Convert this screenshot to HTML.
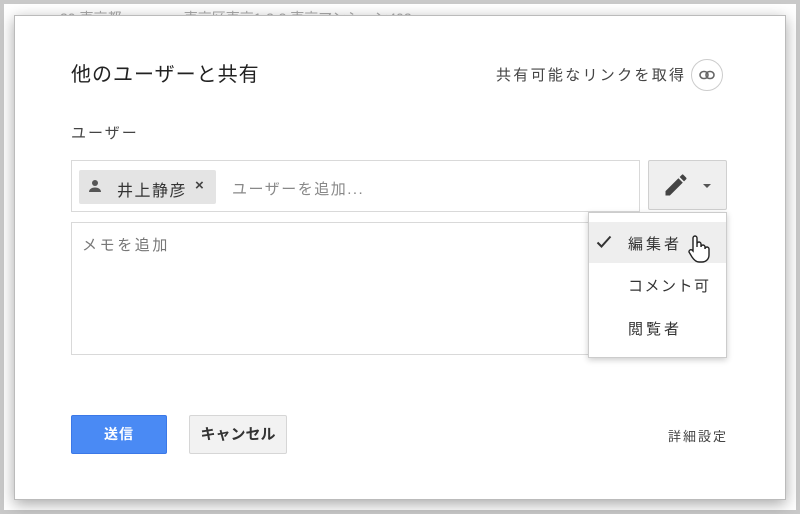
<!DOCTYPE html>
<html><head><meta charset="utf-8"><style>
*{box-sizing:border-box;margin:0;padding:0}
body{width:800px;height:514px;overflow:hidden;background:#c9c9c9;font-family:"Liberation Sans","Noto Sans CJK JP",sans-serif;position:relative}
.bg{position:absolute;left:4px;top:4px;right:4px;bottom:4px;background:#fff}
.bgtxt{position:absolute;top:8px;left:60px;color:#aaa;font-size:14px}
.dlg{position:absolute;left:14px;top:15px;width:772px;height:485px;background:#fff;border:1px solid #bbb;box-shadow:0 4px 14px rgba(0,0,0,.35)}
.a{position:absolute;white-space:nowrap;letter-spacing:2px}
</style></head><body>
<div class="bg"></div>
<div class="bgtxt">30 東京都&nbsp;&nbsp;&nbsp;&nbsp;&nbsp;&nbsp;&nbsp;&nbsp;&nbsp;&nbsp;&nbsp;&nbsp;&nbsp;&nbsp;&nbsp;&nbsp;東京区東京1-2-3 東京マンション402</div>
<div class="dlg"></div>
<div class="a" style="left:71px;top:58px;font-size:20px;color:#222;letter-spacing:1px">他のユーザーと共有</div>
<div class="a" style="left:496px;top:64px;font-size:15px;color:#444;letter-spacing:2.3px">共有可能なリンクを取得</div>
<div class="a" style="left:691px;top:59px;width:32px;height:32px;border:1px solid #ccc;border-radius:50%"><svg width="30" height="30" viewBox="0 0 30 30"><rect x="8" y="11.5" width="8" height="7" rx="3.5" fill="none" stroke="#666" stroke-width="1.6"/><rect x="14" y="11.5" width="8" height="7" rx="3.5" fill="none" stroke="#666" stroke-width="1.6"/></svg></div>
<div class="a" style="left:71px;top:122px;font-size:15px;color:#444">ユーザー</div>
<div class="a" style="left:71px;top:160px;width:569px;height:52px;border:1px solid #d9d9d9"></div>
<div class="a" style="left:79px;top:170px;width:137px;height:34px;background:#e4e4e4;border-radius:2px"></div>
<svg class="a" style="left:87px;top:178px" width="16" height="16" viewBox="0 0 16 16"><circle cx="8" cy="5" r="3" fill="#555"/><path d="M2 14c0-3 3-4.5 6-4.5s6 1.5 6 4.5z" fill="#555"/></svg>
<div class="a" style="left:117px;top:177px;font-size:16px;color:#333;letter-spacing:1.5px">井上静彦</div>
<div class="a" style="left:195px;top:177px;font-size:15px;color:#444;font-weight:bold">×</div>
<div class="a" style="left:232px;top:178px;font-size:15px;color:#888;letter-spacing:1.5px">ユーザーを追加...</div>
<div class="a" style="left:648px;top:160px;width:79px;height:50px;background:#efefef;border:1px solid #d0d0d0;border-radius:2px"></div>
<svg class="a" style="left:662px;top:171px" width="28" height="28" viewBox="0 0 24 24"><path d="M3 17.25V21h3.75L17.81 9.94l-3.75-3.75L3 17.25zM20.71 7.04a1 1 0 000-1.41l-2.34-2.34a1 1 0 00-1.41 0l-1.83 1.83 3.75 3.75 1.83-1.83z" fill="#444"/></svg>
<div class="a" style="left:703px;top:184px;border-left:4px solid transparent;border-right:4px solid transparent;border-top:4px solid #555"></div>
<div class="a" style="left:71px;top:222px;width:530px;height:133px;border:1px solid #d9d9d9"></div>
<div class="a" style="left:82px;top:234px;font-size:15px;color:#777;letter-spacing:2.6px">メモを追加</div>
<div class="a" style="left:588px;top:212px;width:139px;height:146px;background:#fff;border:1px solid #ccc;box-shadow:0 2px 6px rgba(0,0,0,.2)"></div>
<div class="a" style="left:589px;top:222px;width:137px;height:41px;background:#eee"></div>
<svg class="a" style="left:596px;top:235px" width="16" height="14" viewBox="0 0 16 14"><path d="M1.5 7.5l4 4 9-10" fill="none" stroke="#333" stroke-width="2"/></svg>
<div class="a" style="left:628px;top:233px;font-size:15px;color:#333;letter-spacing:3px">編集者</div>
<svg class="a" style="left:686px;top:234px" width="24" height="30" viewBox="0 0 24 30"><path d="M7 17V4a2 2 0 014 0v9V10a2 2 0 014 0v3a2 2 0 014 0v2a2 2 0 014 0v6c0 4-3 7-7 7h-3c-3 0-5-2-7-5l-3-5a2 2 0 013-2z" fill="#fff" stroke="#222" stroke-width="1.4"/></svg>
<div class="a" style="left:628px;top:275px;font-size:15px;color:#333;letter-spacing:1.5px">コメント可</div>
<div class="a" style="left:628px;top:318px;font-size:15px;color:#333;letter-spacing:3px">閲覧者</div>
<div class="a" style="left:71px;top:415px;width:96px;height:39px;background:#4a8af4;border:1px solid #3b78e7;border-radius:2px;color:#fff;font-size:14px;font-weight:bold;text-align:center;line-height:37px;letter-spacing:1px">送信</div>
<div class="a" style="left:189px;top:415px;width:98px;height:39px;background:#f2f2f2;border:1px solid #d6d6d6;border-radius:2px;color:#333;font-size:15px;font-weight:bold;text-align:center;line-height:37px;letter-spacing:0">キャンセル</div>
<div class="a" style="left:668px;top:426px;font-size:13px;color:#444;letter-spacing:2px">詳細設定</div>
</body></html>
